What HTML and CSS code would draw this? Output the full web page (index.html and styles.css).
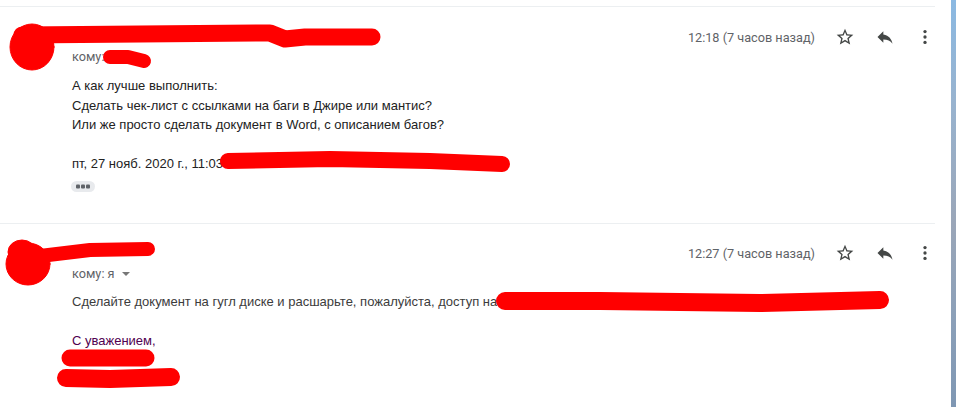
FILE: index.html
```html
<!DOCTYPE html>
<html lang="ru">
<head>
<meta charset="utf-8">
<title>Письмо</title>
<link rel="stylesheet" href="styles.css">
</head>
<body>
<div class="screen">
  <main class="thread">
    <article class="msg msg-first">
      <div class="avatar"></div>
      <div class="content">
        <div class="head">
          <div class="who">
            <div class="sender">&nbsp;</div>
            <div class="to">кому:</div>
          </div>
          <div class="meta">
            <span class="time">12:18 (7 часов назад)</span>
            <button class="icon" aria-label="star"><svg viewBox="0 0 24 24" width="20" height="20"><path d="M22 9.24l-7.19-.62L12 2 9.19 8.63 2 9.24l5.46 4.73L5.82 21 12 17.27 18.18 21l-1.63-7.03L22 9.24zM12 15.4l-3.76 2.27 1-4.28-3.32-2.88 4.38-.38L12 6.1l1.71 4.04 4.38.38-3.32 2.88 1 4.28L12 15.4z"/></svg></button>
            <button class="icon" aria-label="reply"><svg viewBox="0 0 24 24" width="20" height="20"><path d="M10 9V5l-7 7 7 7v-4.1c5 0 8.5 1.6 11 5.1-1-5-4-10-11-11z"/></svg></button>
            <button class="icon" aria-label="more"><svg viewBox="0 0 24 24" width="20" height="20"><circle cx="12" cy="5.5" r="2"/><circle cx="12" cy="12" r="2"/><circle cx="12" cy="18.5" r="2"/></svg></button>
          </div>
        </div>
        <div class="body">
          <div>А как лучше выполнить:</div>
          <div>Сделать чек-лист с ссылками на баги в Джире или мантис?</div>
          <div>Или же просто сделать документ в Word, с описанием багов?</div>
          <div><br></div>
          <div>пт, 27 нояб. 2020 г., 11:03</div>
        </div>
        <div class="dots" aria-label="Показать скрытую часть"><svg viewBox="0 0 24 11" width="24" height="11"><rect x="5" y="3.5" width="4" height="4" rx="1"/><rect x="10" y="3.5" width="4" height="4" rx="1"/><rect x="15" y="3.5" width="4" height="4" rx="1"/></svg></div>
      </div>
    </article>
    <article class="msg msg-second">
      <div class="avatar"></div>
      <div class="content">
        <div class="head">
          <div class="who">
            <div class="sender">&nbsp;</div>
            <div class="to">кому: я <span class="caret"></span></div>
          </div>
          <div class="meta">
            <span class="time">12:27 (7 часов назад)</span>
            <button class="icon" aria-label="star"><svg viewBox="0 0 24 24" width="20" height="20"><path d="M22 9.24l-7.19-.62L12 2 9.19 8.63 2 9.24l5.46 4.73L5.82 21 12 17.27 18.18 21l-1.63-7.03L22 9.24zM12 15.4l-3.76 2.27 1-4.28-3.32-2.88 4.38-.38L12 6.1l1.71 4.04 4.38.38-3.32 2.88 1 4.28L12 15.4z"/></svg></button>
            <button class="icon" aria-label="reply"><svg viewBox="0 0 24 24" width="20" height="20"><path d="M10 9V5l-7 7 7 7v-4.1c5 0 8.5 1.6 11 5.1-1-5-4-10-11-11z"/></svg></button>
            <button class="icon" aria-label="more"><svg viewBox="0 0 24 24" width="20" height="20"><circle cx="12" cy="5.5" r="2"/><circle cx="12" cy="12" r="2"/><circle cx="12" cy="18.5" r="2"/></svg></button>
          </div>
        </div>
        <div class="body">
          <div class="gray">Сделайте документ на гугл диске и расшарьте, пожалуйста, доступ на</div>
          <div><br></div>
          <div class="sig">С уважением,</div>
          <div><br></div>
          <div><br></div>
        </div>
      </div>
    </article>
  </main>
  <div class="edge"></div>
  <svg class="redact" width="956" height="407" viewBox="0 0 956 407" aria-hidden="true">
    <g fill="#ff0000" stroke="#ff0000" stroke-linecap="round" stroke-linejoin="round">
      <ellipse cx="32" cy="47" rx="22" ry="23"/>
      <path d="M22 35 L140 34 L270 33 L285 39 L305 37 L372 37" fill="none" stroke-width="17"/>
      <path d="M110 57 L128 57 L144 61" fill="none" stroke-width="14"/>
      <path d="M228 161 L330 159 L430 161 L502 164" fill="none" stroke-width="16"/>
      <ellipse cx="28" cy="264" rx="22" ry="21"/>
      <ellipse cx="22" cy="252" rx="14" ry="12"/>
      <path d="M40 256 L90 250 L148 249" fill="none" stroke-width="14"/>
      <path d="M505 301 L600 301 L760 303 L880 300" fill="none" stroke-width="18"/>
      <path d="M70 358 L146 358" fill="none" stroke-width="17"/>
      <path d="M66 378 L110 379 L171 377" fill="none" stroke-width="18"/>
    </g>
  </svg>
</div>
</body>
</html>
```
FILE: styles.css
```css
html, body {
  margin: 0;
  padding: 0;
  background: #ffffff;
}

.screen {
  position: relative;
  display: flex;
  width: 956px;
  height: 407px;
  overflow: hidden;
  font-family: "Liberation Sans", Arial, sans-serif;
  color: #222222;
}

.thread {
  width: 951px;
  padding-top: 6px;
  box-sizing: border-box;
}

.edge {
  width: 5px;
  height: 407px;
  background: linear-gradient(180deg, #8bb9e2 0%, #98b3cf 25%, #9aa6b8 55%, #8a9fb8 80%, #7f97b3 100%);
}

.msg {
  display: flex;
  width: 935px;
  border-top: 1px solid #eceff1;
}

.msg-first {
  height: 216px;
}

.avatar {
  width: 72px;
  flex: none;
}

.content {
  flex: 1;
}

.head {
  display: flex;
  justify-content: space-between;
  align-items: flex-start;
}

.msg-first .head {
  padding-top: 20px;
}

.msg-second .head {
  padding-top: 19px;
}

.sender {
  height: 22px;
}

.msg-second .sender {
  height: 23px;
}

.to {
  font-family: Roboto, "Liberation Sans", Arial, sans-serif;
  font-size: 12.7px;
  line-height: 16px;
  color: #5f6368;
  display: flex;
  align-items: center;
  gap: 2px;
}

.caret {
  display: inline-block;
  width: 0;
  height: 0;
  margin-left: 5px;
  border-left: 4px solid transparent;
  border-right: 4px solid transparent;
  border-top: 4px solid #777777;
}

.meta {
  display: flex;
  align-items: center;
  margin-right: -10px;
}

.time {
  font-family: Roboto, "Liberation Sans", Arial, sans-serif;
  font-size: 12.7px;
  color: #5f6368;
  margin-right: 10px;
}

.icon {
  width: 40px;
  height: 20px;
  padding: 0;
  border: 0;
  background: none;
  display: flex;
  align-items: center;
  justify-content: center;
}

.icon svg {
  fill: #444746;
}

.body {
  margin-top: 11px;
  font-size: 13px;
  line-height: 19.5px;
}

.msg-second .body {
  margin-top: 10px;
}

.gray {
  color: #3c3c3c;
}

.sig {
  color: #500050;
}

.dots {
  margin-top: 7px;
  margin-left: -1px;
  width: 24px;
  height: 11px;
  border-radius: 6px;
  background: #e8eaed;
}

.dots svg {
  display: block;
  fill: #5f6368;
}

.redact {
  position: absolute;
  left: 0;
  top: 0;
  pointer-events: none;
}
```
